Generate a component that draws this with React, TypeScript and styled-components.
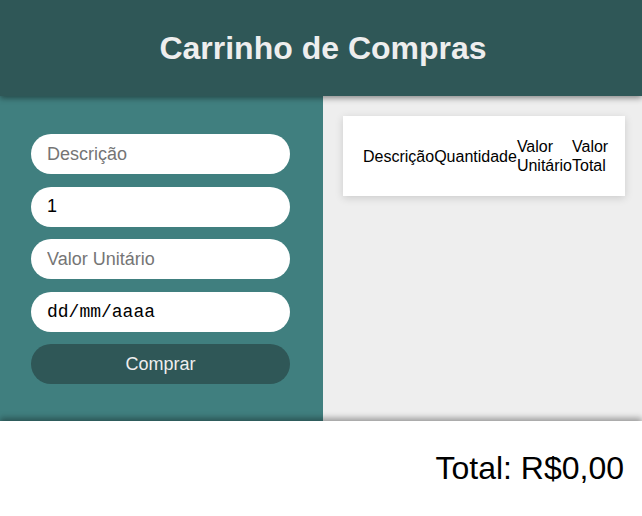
import React from "react";
import styled, { createGlobalStyle } from "styled-components";

const Global = createGlobalStyle`
  html, body { margin: 0; padding: 0; background: #ffffff; }
  body { font-family: "Liberation Sans", Arial, sans-serif; }
  * { box-sizing: border-box; }
`;

const Header = styled.header`
  position: relative;
  z-index: 2;
  height: 96px;
  background: #2f5757;
  display: flex;
  align-items: center;
  justify-content: center;
  padding-left: 4px;
  box-shadow: 0 2px 6px rgba(0, 0, 0, 0.45);
`;

const Title = styled.h1`
  margin: 0;
  font-size: 32px;
  font-weight: bold;
  color: #eeeeee;
`;

const Main = styled.main`
  display: grid;
  grid-template-columns: 323px minmax(0, 1fr);
  height: 325px;
`;

const FormPanel = styled.section`
  background: #407f7f;
  padding: 38px 33px 0 31px;
  display: flex;
  flex-direction: column;
  gap: 12.5px;
`;

const Field = styled.input<{ $mono?: boolean }>`
  height: 40px;
  width: 100%;
  border: none;
  border-radius: 20px;
  padding: 0 16px;
  background: #ffffff;
  color: #000000;
  font-family: ${(p) => (p.$mono ? '"Liberation Mono", "DejaVu Sans Mono", monospace' : '"Liberation Sans", Arial, sans-serif')};
  font-size: 18px;
  outline: none;
  &::placeholder { color: #757575; }
`;

const BuyButton = styled.button`
  height: 40px;
  width: 100%;
  border: none;
  border-radius: 20px;
  background: #2f5757;
  color: #eeeeee;
  font-family: "Liberation Sans", Arial, sans-serif;
  font-size: 18px;
  cursor: pointer;
`;

const ListPanel = styled.section`
  background: #eeeeee;
  padding: 20px 17px 0 20px;
`;

const Card = styled.div`
  background: #ffffff;
  padding: 20px;
  box-shadow: 0 2px 8px rgba(0, 0, 0, 0.15);
`;

const Table = styled.table`
  width: 100%;
  border-collapse: collapse;
`;

const Th = styled.th`
  padding: 1px 0;
  text-align: left;
  font-weight: normal;
  font-size: 16px;
  color: #000000;
  line-height: 19px;
`;

const Footer = styled.footer`
  position: relative;
  z-index: 1;
  height: 95px;
  background: #ffffff;
  display: flex;
  align-items: center;
  justify-content: flex-end;
  padding-right: 18px;
  box-shadow: 0 -3px 6px rgba(0, 0, 0, 0.35);
`;

const TotalText = styled.p`
  margin: 0;
  font-size: 32px;
  color: #000000;
`;

export default function App() {
  return (
    <>
      <Global />
      <Header>
        <Title>Carrinho de Compras</Title>
      </Header>
      <Main>
        <FormPanel>
          <Field placeholder="Descrição" />
          <Field defaultValue="1" />
          <Field placeholder="Valor Unitário" />
          <Field $mono defaultValue="dd/mm/aaaa" readOnly />
          <BuyButton>Comprar</BuyButton>
        </FormPanel>
        <ListPanel>
          <Card>
            <Table>
              <thead>
                <tr>
                  <Th>Descrição</Th>
                  <Th>Quantidade</Th>
                  <Th>Valor Unitário</Th>
                  <Th>Valor Total</Th>
                </tr>
              </thead>
            </Table>
          </Card>
        </ListPanel>
      </Main>
      <Footer>
        <TotalText>Total: R$0,00</TotalText>
      </Footer>
    </>
  );
}
